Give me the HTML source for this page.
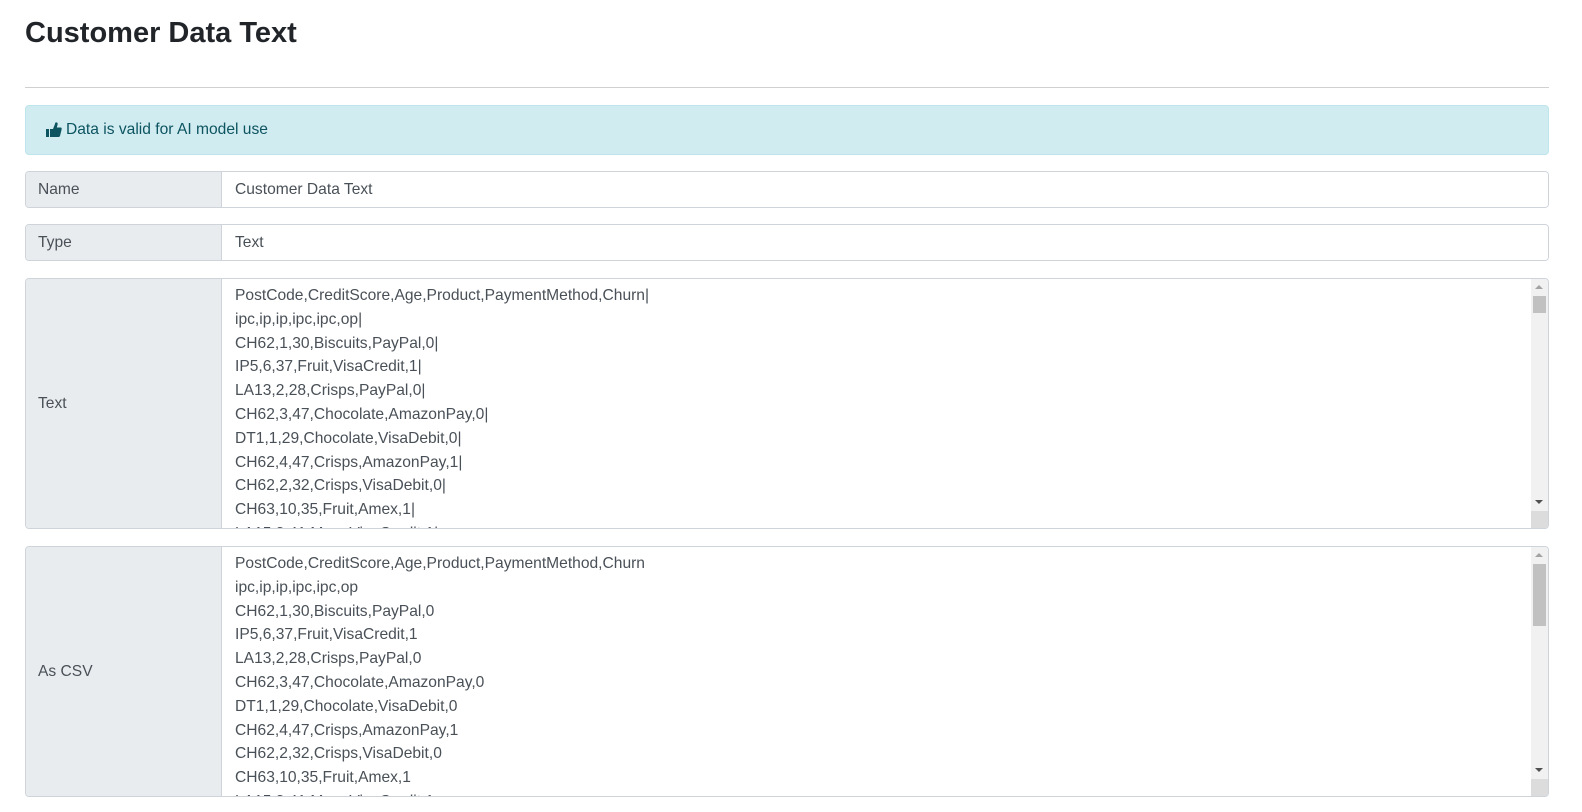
<!DOCTYPE html>
<html><head><meta charset="utf-8"><style>
body{margin:0;background:#fff;font-family:"Liberation Sans",Arial,sans-serif;color:#212529;width:1582px;height:812px;overflow:hidden;position:relative}
h1{position:absolute;left:25px;top:17px;margin:0;font-size:29px;font-weight:bold;color:#212529}
.hr{position:absolute;left:25px;width:1524px;top:87px;border-top:1px solid #d0d0d0}
.alert{position:absolute;left:25px;top:105px;width:1522px;height:48px;background:#d1ecf1;border:1px solid #bee5eb;border-radius:4px;color:#0c5460;font-size:15.6px;line-height:48px}
.alert span{position:absolute;left:40px}
.alert svg{position:absolute;left:20px;top:16px}
.row{position:absolute;left:25px;width:1522px;border:1px solid #ced4da;border-radius:4px;overflow:hidden;font-size:15.6px;color:#495057}
.lab{position:absolute;left:0;top:0;bottom:0;width:196px;background:#e9ecef;border-right:1px solid #ced4da;padding-left:12px;box-sizing:border-box;display:flex;align-items:center}
.val{position:absolute;left:197px;right:0;top:0;bottom:0;padding:0 12px;display:flex;align-items:center;background:#fff}
.ta{position:absolute;left:197px;right:17px;top:0;bottom:0;padding:5px 12px;line-height:23.8px;white-space:pre;overflow:hidden;background:#fff}
.sb{position:absolute;right:0;top:0;bottom:0;width:17px;background:#f1f1f1}
.sb .t{position:absolute;left:2px;width:13px;background:#c1c1c1}
.up{position:absolute;left:4px;top:6px;width:0;height:0;border-left:4px solid transparent;border-right:4px solid transparent;border-bottom:4px solid #a3a3a3}
.dn{position:absolute;left:4px;bottom:24px;width:0;height:0;border-left:4px solid transparent;border-right:4px solid transparent;border-top:4px solid #505050}
.rs{position:absolute;right:0;bottom:0;width:17px;height:17px;background:#dcdcdc}
</style></head><body>
<h1>Customer Data Text</h1>
<div class="hr"></div>
<div class="alert"><svg width="16" height="15" viewBox="0 0 16 15"><rect x="0" y="7" width="3" height="8" fill="#0c5460"/><path d="M4 7 L7 7 L9 2 Q9 0 11 0.5 Q12 1 11.5 3 L10.8 5.5 L15 5.5 Q16 6 15.6 7.5 L14 14 Q13.6 15 12.5 15 L4 15 Z" fill="#0c5460"/></svg><span>Data is valid for AI model use</span></div>
<div class="row" style="top:171px;height:35px"><div class="lab">Name</div><div class="val">Customer Data Text</div></div>
<div class="row" style="top:224px;height:35px"><div class="lab">Type</div><div class="val">Text</div></div>
<div class="row" style="top:278px;height:249px"><div class="lab">Text</div><div class="ta">PostCode,CreditScore,Age,Product,PaymentMethod,Churn|
ipc,ip,ip,ipc,ipc,op|
CH62,1,30,Biscuits,PayPal,0|
IP5,6,37,Fruit,VisaCredit,1|
LA13,2,28,Crisps,PayPal,0|
CH62,3,47,Chocolate,AmazonPay,0|
DT1,1,29,Chocolate,VisaDebit,0|
CH62,4,47,Crisps,AmazonPay,1|
CH62,2,32,Crisps,VisaDebit,0|
CH63,10,35,Fruit,Amex,1|
LA15,3,41,Mars,VisaCredit,1|</div><div class="sb"><div class="up"></div><div class="t" style="top:17px;height:17px"></div><div class="dn"></div><div class="rs"></div></div></div>
<div class="row" style="top:546px;height:249px"><div class="lab">As CSV</div><div class="ta">PostCode,CreditScore,Age,Product,PaymentMethod,Churn
ipc,ip,ip,ipc,ipc,op
CH62,1,30,Biscuits,PayPal,0
IP5,6,37,Fruit,VisaCredit,1
LA13,2,28,Crisps,PayPal,0
CH62,3,47,Chocolate,AmazonPay,0
DT1,1,29,Chocolate,VisaDebit,0
CH62,4,47,Crisps,AmazonPay,1
CH62,2,32,Crisps,VisaDebit,0
CH63,10,35,Fruit,Amex,1
LA15,3,41,Mars,VisaCredit,1</div><div class="sb"><div class="up"></div><div class="t" style="top:17px;height:62px"></div><div class="dn"></div><div class="rs"></div></div></div>
</body></html>
